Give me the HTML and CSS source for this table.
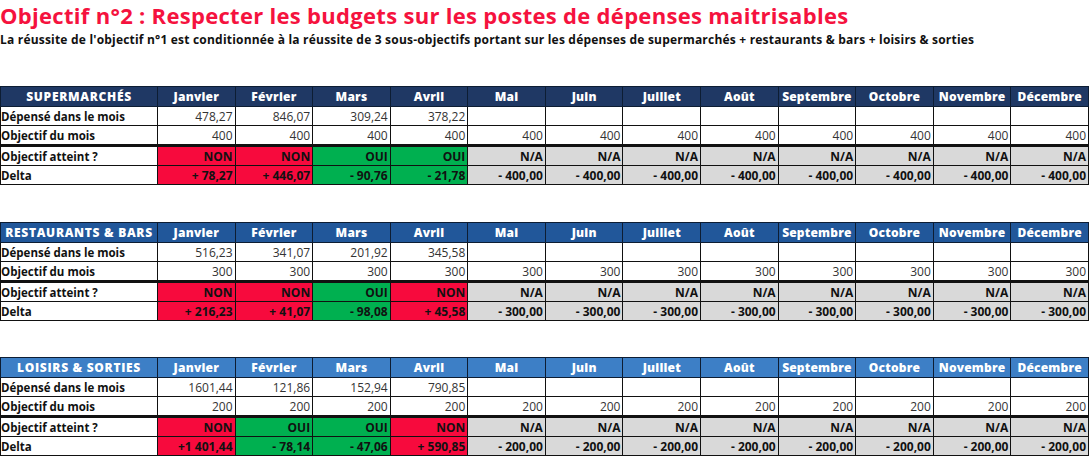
FILE: index.html
```html
<!DOCTYPE html>
<html lang="fr">
<head>
<meta charset="utf-8">
<link rel="stylesheet" href="styles.css">
</head>
<body>
<div class="page">
  <h1 class="title">Objectif n°2 : Respecter les budgets sur les postes de dépenses maitrisables</h1>
  <p class="subtitle">La réussite de l'objectif n°1 est conditionnée à la réussite de 3 sous-objectifs portant sur les dépenses de supermarchés + restaurants &amp; bars + loisirs &amp; sorties</p>

  <table class="budget t1">
    <colgroup><col class="c-label"><col span="12"></colgroup>
    <thead>
      <tr><th class="cat">SUPERMARCHÉS</th><th>Janvier</th><th>Février</th><th>Mars</th><th>Avril</th><th>Mai</th><th>Juin</th><th>Juillet</th><th>Août</th><th>Septembre</th><th>Octobre</th><th>Novembre</th><th>Décembre</th></tr>
    </thead>
    <tbody>
      <tr><td class="lbl">Dépensé dans le mois</td><td>478,27</td><td>846,07</td><td>309,24</td><td>378,22</td><td></td><td></td><td></td><td></td><td></td><td></td><td></td><td></td></tr>
      <tr class="goal"><td class="lbl">Objectif du mois</td><td>400</td><td>400</td><td>400</td><td>400</td><td>400</td><td>400</td><td>400</td><td>400</td><td>400</td><td>400</td><td>400</td><td>400</td></tr>
      <tr class="res"><td class="lbl">Objectif atteint ?</td><td class="no">NON</td><td class="no">NON</td><td class="ok">OUI</td><td class="ok">OUI</td><td class="na">N/A</td><td class="na">N/A</td><td class="na">N/A</td><td class="na">N/A</td><td class="na">N/A</td><td class="na">N/A</td><td class="na">N/A</td><td class="na">N/A</td></tr>
      <tr class="res"><td class="lbl">Delta</td><td class="no">+ 78,27</td><td class="no">+ 446,07</td><td class="ok">- 90,76</td><td class="ok">- 21,78</td><td class="na">- 400,00</td><td class="na">- 400,00</td><td class="na">- 400,00</td><td class="na">- 400,00</td><td class="na">- 400,00</td><td class="na">- 400,00</td><td class="na">- 400,00</td><td class="na">- 400,00</td></tr>
    </tbody>
  </table>

  <table class="budget t2">
    <colgroup><col class="c-label"><col span="12"></colgroup>
    <thead>
      <tr><th class="cat">RESTAURANTS &amp; BARS</th><th>Janvier</th><th>Février</th><th>Mars</th><th>Avril</th><th>Mai</th><th>Juin</th><th>Juillet</th><th>Août</th><th>Septembre</th><th>Octobre</th><th>Novembre</th><th>Décembre</th></tr>
    </thead>
    <tbody>
      <tr><td class="lbl">Dépensé dans le mois</td><td>516,23</td><td>341,07</td><td>201,92</td><td>345,58</td><td></td><td></td><td></td><td></td><td></td><td></td><td></td><td></td></tr>
      <tr class="goal"><td class="lbl">Objectif du mois</td><td>300</td><td>300</td><td>300</td><td>300</td><td>300</td><td>300</td><td>300</td><td>300</td><td>300</td><td>300</td><td>300</td><td>300</td></tr>
      <tr class="res"><td class="lbl">Objectif atteint ?</td><td class="no">NON</td><td class="no">NON</td><td class="ok">OUI</td><td class="no">NON</td><td class="na">N/A</td><td class="na">N/A</td><td class="na">N/A</td><td class="na">N/A</td><td class="na">N/A</td><td class="na">N/A</td><td class="na">N/A</td><td class="na">N/A</td></tr>
      <tr class="res"><td class="lbl">Delta</td><td class="no">+ 216,23</td><td class="no">+ 41,07</td><td class="ok">- 98,08</td><td class="no">+ 45,58</td><td class="na">- 300,00</td><td class="na">- 300,00</td><td class="na">- 300,00</td><td class="na">- 300,00</td><td class="na">- 300,00</td><td class="na">- 300,00</td><td class="na">- 300,00</td><td class="na">- 300,00</td></tr>
    </tbody>
  </table>

  <table class="budget t3">
    <colgroup><col class="c-label"><col span="12"></colgroup>
    <thead>
      <tr><th class="cat">LOISIRS &amp; SORTIES</th><th>Janvier</th><th>Février</th><th>Mars</th><th>Avril</th><th>Mai</th><th>Juin</th><th>Juillet</th><th>Août</th><th>Septembre</th><th>Octobre</th><th>Novembre</th><th>Décembre</th></tr>
    </thead>
    <tbody>
      <tr><td class="lbl">Dépensé dans le mois</td><td>1601,44</td><td>121,86</td><td>152,94</td><td>790,85</td><td></td><td></td><td></td><td></td><td></td><td></td><td></td><td></td></tr>
      <tr class="goal"><td class="lbl">Objectif du mois</td><td>200</td><td>200</td><td>200</td><td>200</td><td>200</td><td>200</td><td>200</td><td>200</td><td>200</td><td>200</td><td>200</td><td>200</td></tr>
      <tr class="res"><td class="lbl">Objectif atteint ?</td><td class="no">NON</td><td class="ok">OUI</td><td class="ok">OUI</td><td class="no">NON</td><td class="na">N/A</td><td class="na">N/A</td><td class="na">N/A</td><td class="na">N/A</td><td class="na">N/A</td><td class="na">N/A</td><td class="na">N/A</td><td class="na">N/A</td></tr>
      <tr class="res"><td class="lbl">Delta</td><td class="no">+1 401,44</td><td class="ok">- 78,14</td><td class="ok">- 47,06</td><td class="no">+ 590,85</td><td class="na">- 200,00</td><td class="na">- 200,00</td><td class="na">- 200,00</td><td class="na">- 200,00</td><td class="na">- 200,00</td><td class="na">- 200,00</td><td class="na">- 200,00</td><td class="na">- 200,00</td></tr>
    </tbody>
  </table>
</div>
</body>
</html>
```

FILE: styles.css
```css
html, body {
  margin: 0;
  padding: 0;
  background: #ffffff;
}

.page {
  width: 1091px;
  height: 463px;
  overflow: hidden;
  font-family: "Open Sans", "DejaVu Sans", sans-serif;
  color: #111;
  padding-top: 3px;
  box-sizing: border-box;
}

.title {
  margin: 0;
  font-size: 22px;
  line-height: 24px;
  font-weight: 700;
  letter-spacing: 0.3px;
  color: #f5123e;
  white-space: nowrap;
}

.subtitle {
  margin: 6px 0 0 0;
  font-size: 12px;
  line-height: 14px;
  font-weight: 700;
  letter-spacing: 0.2px;
  color: #111;
  white-space: nowrap;
}

.budget {
  width: 1089px;
  table-layout: fixed;
  border-collapse: collapse;
  font-size: 12px;
}

.t1 { margin-top: 39px; }
.t2 { margin-top: 37px; }
.t3 { margin-top: 36px; }

.c-label { width: 157px; }

.budget th {
  height: 19px;
  padding: 0 1px;
  color: #ffffff;
  font-weight: 800;
  letter-spacing: 0.2px;
  text-align: center;
  border: 1px solid #0d1d33;
  white-space: nowrap;
  overflow: hidden;
}

.budget th.cat {
  letter-spacing: 0.7px;
}

.t1 th { background: #1f3864; }
.t2 th { background: #21579a; }
.t3 th { background: #3d7fc6; }

.budget td {
  height: 18px;
  padding: 0 2px 0 3px;
  border: 1px solid #111;
  text-align: right;
  white-space: nowrap;
  overflow: hidden;
  color: #333;
}

.budget td.lbl {
  text-align: left;
  padding-left: 0;
  font-size: 11.5px;
  font-weight: 700;
  color: #111;
}

.budget tr.goal td {
  border-bottom: 3px solid #111;
}

.budget tr.res td {
  font-weight: 700;
  color: #111;
}

.budget td.no { background: #f70a3d; }
.budget td.ok { background: #00b050; }
.budget td.na { background: #d9d9d9; }
```
